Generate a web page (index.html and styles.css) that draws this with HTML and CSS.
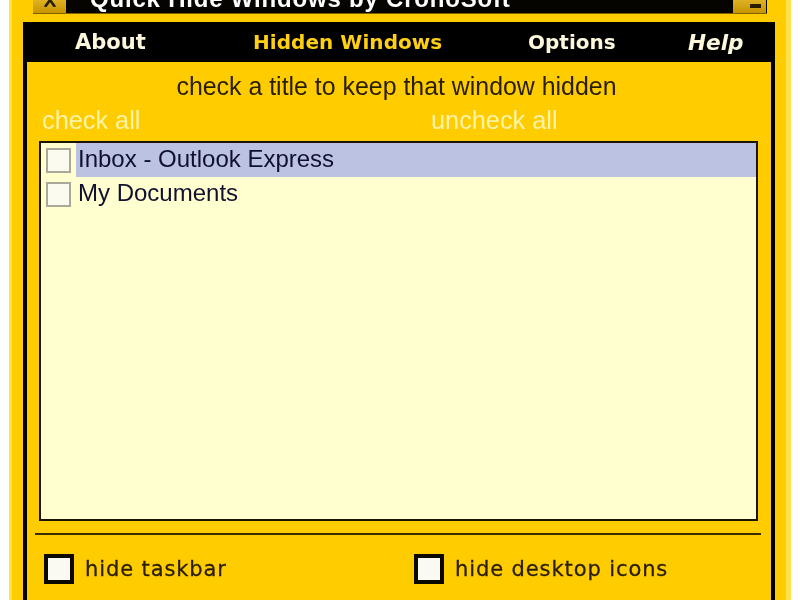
FILE: index.html
```html
<!DOCTYPE html>
<html lang="en">
<head>
<meta charset="utf-8">
<title>Quick Hide Windows by CronoSoft</title>
<link rel="stylesheet" href="styles.css">
</head>
<body>
<div class="window">
  <div class="titlebar">
    <div class="btn btn-close">
      <svg width="20" height="14" viewBox="0 0 20 14"><path d="M5 0 L15 14 M15 0 L5 14" stroke="#2a1e00" stroke-width="2.6" fill="none"/></svg>
    </div>
    <div class="title">Quick Hide Windows by CronoSoft</div>
    <div class="btn btn-min"><span class="dash"></span></div>
  </div>
  <div class="inner">
    <nav class="menu">
      <span class="tab tab-about">About</span>
      <span class="tab tab-active">Hidden Windows</span>
      <span class="tab tab-options">Options</span>
      <span class="tab tab-help">Help</span>
    </nav>
    <div class="panel">
      <div class="hint">check a title to keep that window hidden</div>
      <div class="links">
        <span class="link link-check">check all</span>
        <span class="link">uncheck all</span>
      </div>
      <div class="list">
        <div class="row">
          <span class="check"></span>
          <span class="row-label selected">Inbox - Outlook Express</span>
        </div>
        <div class="row">
          <span class="check"></span>
          <span class="row-label">My Documents</span>
        </div>
      </div>
      <div class="rule"></div>
      <div class="options">
        <div class="option option-first"><span class="box"></span><span class="option-label">hide taskbar</span></div>
        <div class="option"><span class="box"></span><span class="option-label">hide desktop icons</span></div>
      </div>
    </div>
  </div>
</div>
</body>
</html>
```
FILE: styles.css
```css
html, body {
  margin: 0;
  padding: 0;
  width: 800px;
  height: 600px;
  overflow: hidden;
  background: #fff;
}
body { padding: 0 9px 0 9px; box-sizing: border-box; }
.window {
  height: 640px;
  background: #ffcc00;
  border-left: 3px solid #ffe14a;
  border-right: 5px solid #ffe14a;
  padding: 0 11px 0 11px;
  margin-top: -26px;
  font-family: "DejaVu Sans", sans-serif;
  filter: blur(0.5px);
}
.titlebar {
  height: 40px;
  margin: 0 8px 8px 10px;
  background: #050400;
  display: flex;
  align-items: flex-end;
  padding: 0 1px 0 0;
  border-bottom: 1px solid #7a6000;
  box-sizing: border-box;
}
.btn {
  width: 33px;
  height: 27px;
  background: linear-gradient(#f6d24a, #c89400);
  display: flex;
  align-items: center;
  justify-content: center;
  flex: none;
}
.title {
  color: #fff;
  font: bold 24px "Liberation Sans", sans-serif;
  letter-spacing: 0.8px;
  margin: 0 0 2px 24px;
  flex: 1;
  line-height: 24px;
  white-space: nowrap;
}
.dash { width: 11px; height: 4px; background: #2a1e00; margin: 12px 0 0 12px; }
.inner { background: #000; padding: 0 4px 0 4px; }
.menu {
  height: 40px;
  display: flex;
  align-items: center;
  font: bold 20px "DejaVu Sans", sans-serif;
  color: #fdf8dc;
}
.tab { white-space: nowrap; }
.tab-about { font-size: 21px; margin-left: 48px; width: 178px; }
.tab-active { color: #ffcf14; width: 275px; letter-spacing: 0.05px; }
.tab-options { width: 160px; }
.tab-help { font-style: italic; font-size: 21.6px; }
.panel {
  background: #ffcc00;
  height: 560px;
  padding: 9px 13px 0 12px;
  box-sizing: border-box;
}
.hint {
  text-align: center;
  font: 24.9px "Liberation Sans", sans-serif;
  color: #2a1e00;
  line-height: 30px;
  margin-right: 4px;
}
.links {
  display: flex;
  font: 25.3px "Liberation Sans", sans-serif;
  color: #fff3a8;
  line-height: 30px;
  margin-top: 4px;
  padding-left: 3px;
}
.link-check { width: 389px; }
.list {
  height: 380px;
  margin: 6px 0 0 0;
  border: 2px solid #1a1400;
  background: #ffffcf;
  box-sizing: border-box;
}
.row { display: flex; height: 34px; align-items: center; }
.check {
  width: 21px;
  height: 21px;
  margin: 0 5px;
  border: 2px solid #aaa898;
  background: #fbfbf0;
  flex: none;
}
.row-label {
  flex: 1;
  font: 24px "Liberation Sans", sans-serif;
  color: #101030;
  line-height: 32px;
  padding: 0 0 2px 2px;
}
.selected { background: #bcc2e2; }
.rule { height: 2px; background: #3a2c00; margin: 12px -3px 0 -4px; }
.options { display: flex; margin-top: 19px; padding-left: 5px; }
.option { display: flex; align-items: center; }
.option-first { width: 370px; }
.box {
  width: 22px;
  height: 22px;
  border: 4px solid #0a0800;
  background: #fafaf2;
  flex: none;
  margin-right: 11px;
}
.option-label {
  font: 21px "DejaVu Sans", sans-serif;
  letter-spacing: 0.9px;
  color: #2a1e00;
  -webkit-text-stroke: 0.3px #2a1e00;
}
```
